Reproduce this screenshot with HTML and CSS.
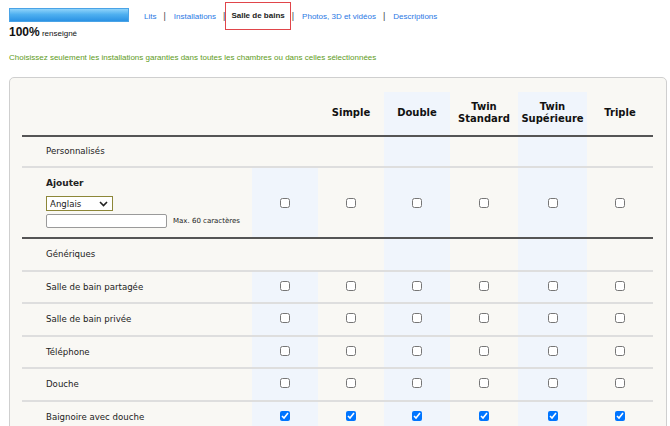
FILE: index.html
```html
<!DOCTYPE html>
<html lang="fr">
<head>
<meta charset="utf-8">
<title>Salle de bains</title>
<link rel="stylesheet" href="styles.css">
</head>
<body>
<div class="top">
  <div class="progress">
    <div class="bar"></div>
    <div class="pct"><b>100%</b> renseigné</div>
  </div>
  <nav class="tabs">
    <a href="#">Lits</a><span class="sep">|</span>
    <a href="#">Installations</a><span class="sep">|</span>
    <a href="#" class="active">Salle de bains</a><span class="sep">|</span>
    <a href="#">Photos, 3D et vidéos</a><span class="sep">|</span>
    <a href="#">Descriptions</a>
  </nav>
</div>
<p class="hint">Choisissez seulement les installations garanties dans toutes les chambres ou dans celles sélectionnées</p>
<div class="panel">
  <table class="grid">
    <colgroup>
      <col class="w-label"><col class="w-66"><col class="w-66"><col class="w-66"><col class="w-68"><col class="w-69"><col class="w-66">
    </colgroup>
    <thead>
      <tr>
        <th></th><th></th><th>Simple</th><th class="alt">Double</th><th>Twin<br>Standard</th><th class="alt">Twin<br>Supérieure</th><th>Triple</th>
      </tr>
    </thead>
    <tbody>
      <tr class="section first">
        <td class="lbl">Personnalisés</td><td></td><td></td><td class="alt"></td><td></td><td class="alt"></td><td></td>
      </tr>
      <tr class="add">
        <td class="lbl">
          <div class="add-title">Ajouter</div>
          <div class="sel-wrap">
            <select class="lang"><option>Anglais</option></select>
            <svg class="chev" width="9" height="6" viewBox="0 0 9 6"><path d="M1 1l3.5 3.5L8 1" fill="none" stroke="#222" stroke-width="1.6"/></svg>
          </div>
          <div class="name-row"><input type="text" class="name"><span class="max">Max. 60 caractères</span></div>
        </td>
        <td class="alt"><input type="checkbox"></td><td><input type="checkbox"></td><td class="alt"><input type="checkbox"></td><td><input type="checkbox"></td><td class="alt"><input type="checkbox"></td><td><input type="checkbox"></td>
      </tr>
      <tr class="section second">
        <td class="lbl">Génériques</td><td></td><td></td><td class="alt"></td><td></td><td class="alt"></td><td></td>
      </tr>
      <tr class="item">
        <td class="lbl">Salle de bain partagée</td>
        <td class="alt"><input type="checkbox"></td><td><input type="checkbox"></td><td class="alt"><input type="checkbox"></td><td><input type="checkbox"></td><td class="alt"><input type="checkbox"></td><td><input type="checkbox"></td>
      </tr>
      <tr class="item">
        <td class="lbl">Salle de bain privée</td>
        <td class="alt"><input type="checkbox"></td><td><input type="checkbox"></td><td class="alt"><input type="checkbox"></td><td><input type="checkbox"></td><td class="alt"><input type="checkbox"></td><td><input type="checkbox"></td>
      </tr>
      <tr class="item">
        <td class="lbl">Téléphone</td>
        <td class="alt"><input type="checkbox"></td><td><input type="checkbox"></td><td class="alt"><input type="checkbox"></td><td><input type="checkbox"></td><td class="alt"><input type="checkbox"></td><td><input type="checkbox"></td>
      </tr>
      <tr class="item">
        <td class="lbl">Douche</td>
        <td class="alt"><input type="checkbox"></td><td><input type="checkbox"></td><td class="alt"><input type="checkbox"></td><td><input type="checkbox"></td><td class="alt"><input type="checkbox"></td><td><input type="checkbox"></td>
      </tr>
      <tr class="item">
        <td class="lbl">Baignoire avec douche</td>
        <td class="alt"><input type="checkbox" checked></td><td><input type="checkbox" checked></td><td class="alt"><input type="checkbox" checked></td><td><input type="checkbox" checked></td><td class="alt"><input type="checkbox" checked></td><td><input type="checkbox" checked></td>
      </tr>
    </tbody>
  </table>
</div>
</body>
</html>
```
FILE: styles.css
```css
html, body {
  margin: 0;
  padding: 0;
  background: #fff;
}
body {
  font-family: "Liberation Sans", Arial, sans-serif;
  color: #222;
  overflow: hidden;
}
.top {
  display: flex;
  align-items: flex-start;
  padding: 2px 0 0 9px;
}
.progress {
  width: 120px;
  padding-top: 6px;
}
.bar {
  height: 12px;
  border: 1px solid #4aa3e6;
  background: linear-gradient(#8fd3fa 0%, #4fb0f0 45%, #2b92e4 100%);
}
.pct {
  margin-top: 3px;
  font-size: 8px;
  color: #111;
}
.pct b {
  font-size: 12px;
}
.tabs {
  display: flex;
  align-items: center;
  height: 28px;
  margin-left: 15px;
  font-size: 8px;
}
.tabs a {
  color: #2b78e4;
  text-decoration: none;
}
.sep {
  color: #444;
  margin: 0 8px 0 7px;
  font-size: 9px;
}
.tabs a.active {
  color: #222;
  font-weight: bold;
  border: 1px solid #e0454a;
  height: 26px;
  line-height: 26px;
  padding: 0 5px;
  margin: 0 -6px 0 -8px;
}
.hint {
  margin: 14px 0 0 9px;
  font-size: 8px;
  color: #5e9b22;
}
.panel {
  margin: 15px 3px 0 9px;
  border: 1px solid #cfcfcf;
  border-radius: 5px;
  background: #f9f8f4;
  padding: 14px 13px 20px 12px;
}
.grid {
  border-collapse: collapse;
  table-layout: fixed;
  width: 631px;
  font-family: "DejaVu Sans", Verdana, sans-serif;
}
.w-label { width: 230px; }
.w-66 { width: 66px; }
.w-68 { width: 68px; }
.w-69 { width: 69px; }
.grid th {
  height: 42.5px;
  padding: 0;
  font-size: 10px;
  line-height: 12px;
  font-weight: bold;
  color: #111;
  text-align: center;
  vertical-align: middle;
  border-bottom: 2px solid #555;
}
.grid td {
  padding: 0;
  text-align: center;
  vertical-align: middle;
  border-bottom: 2px solid #dedede;
}
.grid .alt {
  background: #f0f5fc;
}
.grid tr.section td:nth-child(2) {
  background: transparent;
}
.grid td.lbl {
  text-align: left;
  padding-left: 24px;
  font-size: 8.6px;
  color: #222;
}
.section.first td {
  height: 29px;
}
.section.second td {
  height: 31px;
}
.item td {
  height: 30.5px;
}
.add td {
  height: 69px;
  border-bottom: 2px solid #555;
}
.add-title {
  font-weight: bold;
  font-size: 9px;
  margin-top: 2px;
}
.sel-wrap {
  position: relative;
  width: 67px;
  margin-top: 8px;
}
.lang {
  appearance: none;
  -webkit-appearance: none;
  display: block;
  box-sizing: border-box;
  width: 67px;
  height: 15px;
  margin: 0;
  padding: 0 0 0 3px;
  border: 1px solid #8d8738;
  border-radius: 0;
  background: #fff;
  font-family: "DejaVu Sans", Verdana, sans-serif;
  font-size: 8.6px;
  color: #222;
}
.chev {
  position: absolute;
  right: 5px;
  top: 5px;
  pointer-events: none;
}
.name-row {
  display: flex;
  align-items: center;
  margin-top: 3px;
}
.name {
  width: 121px;
  height: 14px;
  box-sizing: border-box;
  margin: 0;
  padding: 0;
  border: 1px solid #9a9a9a;
  border-radius: 2px;
  background: #fff;
}
.max {
  font-size: 7px;
  margin-left: 6px;
  color: #222;
}
.grid input[type="checkbox"] {
  width: 10px;
  height: 10px;
  margin: 0;
  vertical-align: middle;
}
.item input[type="checkbox"] {
  position: relative;
  top: -2px;
}
```
